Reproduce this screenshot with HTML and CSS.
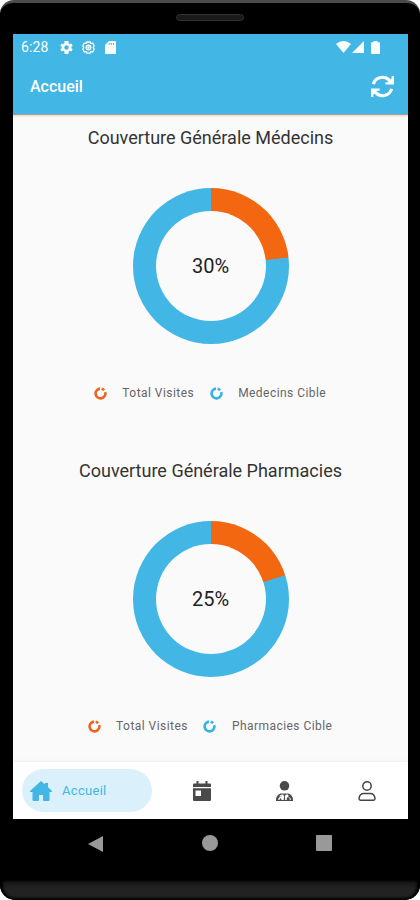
FILE: index.html
```
<!DOCTYPE html>
<html lang="fr">
<head>
  <meta charset="UTF-8" />
  <meta name="viewport" content="width=device-width, initial-scale=1" />
  <title>Accueil</title>
  <link rel="stylesheet" href="styles.css">
</head>
<body>

  <div class="phone">
    <div class="speaker-bar"><div class="speaker"></div></div>

    <div class="screen">
      <header class="header">
        <div class="status-bar">
          <span class="time">6:28</span>
          <svg class="status-icon" viewBox="2 2 20 20"><path fill-rule="evenodd" d="M19.400 13a7.500 7.500 0 0 0 0-2l2.100-1.600-2-3.500-2.500 1a7.500 7.500 0 0 0-1.700-1L15 2H9l-.4 3.900a7.500 7.500 0 0 0-1.700 1l-2.400-1-2 3.500L4.600 11a7.500 7.500 0 0 0 0 2l-2.100 1.600 2 3.500 2.500-1a7.500 7.500 0 0 0 1.700 1L9 22h6l.3-3.900a7.500 7.500 0 0 0 1.700-1l2.500 1 2-3.500zM12 15.500a3.500 3.500 0 1 1 0-7 3.500 3.500 0 0 1 0 7z"/></svg>
          <svg class="status-icon outline" viewBox="0 0 20 20"><path d="M7.500 1.500h5l1 2 3-.2 2.200 4L17.300 10l1.400 2.700-2.200 4-3-.2-1 2h-5l-1-2-3 .2-2.200-4L2.700 10 1.300 7.300l2.200-4 3 .2z"/><circle cx="10" cy="10" r="3.500"/><circle cx="10" cy="10" r=".8"/></svg>
          <svg class="sd-icon" viewBox="0 0 11 13"><path fill-rule="evenodd" d="M4 0h6a1 1 0 0 1 1 1v11a1 1 0 0 1-1 1H1a1 1 0 0 1-1-1V4zM3.700 2v2h1V2zM5.800 2v2h1V2zM7.900 2v2h1V2z"/></svg>
          <div class="status-right">
            <svg width="15" height="12" viewBox="0 0 15 12"><path d="M0 3Q7.500-3 15 3L7.500 12z"/></svg>
            <svg width="12" height="12" viewBox="0 0 12 12"><path d="M12 0v12H0z"/></svg>
            <svg class="battery" width="9" height="13" viewBox="0 0 9 13"><path d="M2.500 0h4v1.200H8a1 1 0 0 1 1 1V12a1 1 0 0 1-1 1H1a1 1 0 0 1-1-1V2.200a1 1 0 0 1 1-1h1.500z"/></svg>
          </div>
        </div>
        <div class="app-bar">
          <h1>Accueil</h1>
          <svg class="refresh" viewBox="0 0 24 24">
            <path class="arc" d="M2.500 9.500A9.800 9.800 0 0 1 19.500 6M21.500 14.500A9.800 9.800 0 0 1 4.500 18"/>
            <path d="M24 1v9h-9V7.600h2.500L21.500 3.500V1zM0 23v-9h9v2.400H6.500L2.500 20.500V23z"/>
          </svg>
        </div>
      </header>

      <main class="content">
        <section class="chart-card">
          <h2>Couverture Générale Médecins</h2>
          <div class="donut medecins"><span>30%</span></div>
          <div class="legend">
            <svg class="orange" viewBox="0 0 13 13"><path d="M7.600 1.700A4.900 4.900 0 0 1 10.200 3.200M11.200 5.100A4.900 4.900 0 1 1 6 1.600"/></svg>
            <span>Total Visites</span>
            <svg class="blue" viewBox="0 0 13 13"><path d="M7.600 1.700A4.900 4.900 0 0 1 10.200 3.200M11.200 5.100A4.900 4.900 0 1 1 6 1.600"/></svg>
            <span>Medecins Cible</span>
          </div>
        </section>

        <section class="chart-card">
          <h2>Couverture Générale Pharmacies</h2>
          <div class="donut pharmacies"><span>25%</span></div>
          <div class="legend">
            <svg class="orange" viewBox="0 0 13 13"><path d="M7.600 1.700A4.900 4.900 0 0 1 10.200 3.200M11.200 5.100A4.900 4.900 0 1 1 6 1.600"/></svg>
            <span>Total Visites</span>
            <svg class="blue" viewBox="0 0 13 13"><path d="M7.600 1.700A4.900 4.900 0 0 1 10.200 3.200M11.200 5.100A4.900 4.900 0 1 1 6 1.600"/></svg>
            <span>Pharmacies Cible</span>
          </div>
        </section>
      </main>

      <nav class="tabs">
        <a class="tab active">
          <svg width="22" height="20" viewBox="0 0 22 20"><path d="M11 0l4 3.600V2h3v4.300l4 3.700v1h-2.500v8a1 1 0 0 1-1 1H14a1 1 0 0 1-1-1v-5H9v5a1 1 0 0 1-1 1H3.500a1 1 0 0 1-1-1v-8H0v-1z"/></svg>
          <span>Accueil</span>
        </a>
        <a class="tab">
          <svg width="18" height="20" viewBox="0 0 18 20"><path fill-rule="evenodd" d="M3.500 0h2v2.500h7V0h2v2.500H17a1 1 0 0 1 1 1V6H0V3.500a1 1 0 0 1 1-1h2.500zM0 7.200h18V19a1 1 0 0 1-1 1H1a1 1 0 0 1-1-1zM2.500 9.500v5.500h5.500v-5.500z"/></svg>
        </a>
        <a class="tab">
          <svg width="17" height="20" viewBox="0 0 17 20"><circle cx="8.500" cy="4.800" r="4.800"/><path fill-rule="evenodd" d="M4.500 12.500h8Q17 14 17 19v1H0v-1Q0 14 4.500 12.500zM3.800 14v2Q2.200 16.700 2.200 19h1.300q0-1.700 1-1.700t1 1.700h2.300l.3-4-1-1.500H5.200V16h-.4v-2zM9.900 13.500l-1 1.500.3 4h1.800a1.700 1.700 0 0 1 1-2.700v-2.800zM13 16.300v-2.300h-.4v2.500q1.400.5 1.200 2.500h1q.4-2-1.800-2.700z"/></svg>
        </a>
        <a class="tab">
          <svg class="user" width="18" height="20" viewBox="0 0 18 20"><circle cx="9" cy="5" r="4.200"/><path d="M1 17.500Q1.500 12.500 6 12.500h6q4.500 0 5 5 0 1.700-1.500 1.700h-13Q1 19.200 1 17.500z"/></svg>
        </a>
      </nav>
    </div>

    <div class="android-bar">
      <svg width="16" height="18" viewBox="0 0 16 18"><path d="M15 1v16L0 9z"/></svg>
      <svg width="16" height="16" viewBox="0 0 16 16"><circle cx="8" cy="8" r="8"/></svg>
      <svg width="16" height="16" viewBox="0 0 16 16"><rect width="16" height="16" rx="1"/></svg>
    </div>
    <div class="chin"></div>
  </div>

</body>
</html>
```
FILE: styles.css
```
* {
  box-sizing: border-box;
}

body {
  margin: 0;
  background: #fff;
  font-family: Roboto, sans-serif;
  color: #333;
}

h1, h2 {
  margin: 0;
}

svg {
  display: block;
  flex-shrink: 0;
}

.phone {
  width: 420px;
  height: 900px;
  background: #000;
  border-top: 3px solid #4b4b4b;
  border-radius: 14px 14px 15px 15px;
  overflow: hidden;
  display: flex;
  flex-direction: column;
}

.speaker-bar {
  height: 31px;
  display: flex;
  justify-content: center;
  padding-top: 11px;
}

.speaker {
  width: 68px;
  height: 7px;
  border-radius: 4px;
  border: 1px solid #303030;
  background: #1a1a1a;
}

.screen {
  height: 785px;
  margin: 0 12px 0 13px;
  background: #fafafa;
  display: flex;
  flex-direction: column;
  overflow: hidden;
}

.header {
  height: 81px;
  background: #42b6e4;
  color: #fff;
  fill: #fff;
  border-bottom: 1px solid #a99f99;
  box-shadow: 0 1px 2px #e8cfc2;
}

.status-bar {
  height: 26px;
  padding: 0 28px 0 8px;
  display: flex;
  align-items: center;
}

.time {
  width: 39px;
  font-size: 14px;
  letter-spacing: 0.1px;
}

.status-icon {
  width: 13px;
  height: 13px;
  margin-right: 9px;
}

.outline {
  fill: none;
  stroke: #fff;
  stroke-width: 2;
}

.sd-icon {
  width: 11px;
  height: 13px;
  margin-left: 1px;
}

.status-right {
  margin-left: auto;
  display: flex;
  align-items: center;
  gap: 1px;
}

.battery {
  margin-left: 6px;
}

.app-bar {
  height: 52px;
  padding: 0 14px 0 17px;
  display: flex;
  justify-content: space-between;
  align-items: center;
}

.app-bar h1 {
  font-size: 16px;
  font-weight: 500;
}

.refresh {
  width: 23px;
  height: 23px;
}

.arc {
  fill: none;
  stroke: #fff;
  stroke-width: 3.300;
}

.content {
  flex: 1;
}

.chart-card {
  height: 333px;
  padding-top: 11px;
  display: flex;
  flex-direction: column;
  align-items: center;
}

.chart-card:last-child {
  height: 314px;
}

.chart-card h2 {
  font-size: 18px;
  font-weight: 400;
  line-height: 24px;
}

.donut {
  width: 156px;
  height: 156px;
  margin-top: 38px;
  border-radius: 50%;
  display: grid;
  place-items: center;
}

.donut span {
  width: 110px;
  height: 110px;
  border-radius: 50%;
  background: #fafafa;
  color: #222;
  font-size: 20px;
  line-height: 110px;
  text-align: center;
}

.medecins {
  background: conic-gradient(#f36710 23.200%, #42b6e4 23.300%);
}

.pharmacies {
  background: conic-gradient(#f36710 20%, #42b6e4 20.100%);
}

.legend {
  margin: 41px 1px 0 0;
  display: flex;
  align-items: center;
  gap: 15.500px;
  font-size: 12px;
  line-height: 16px;
  color: #666;
  letter-spacing: 0.450px;
}

.legend svg {
  width: 13px;
  height: 13px;
  fill: none;
  stroke-width: 2.600;
}

.orange {
  stroke: #ed651d;
}

.blue {
  stroke: #37b3e2;
}

.tabs {
  height: 57px;
  padding: 0 16px 0 9px;
  background: #fff;
  box-shadow: 0 -1px 3px #eee;
  display: flex;
  justify-content: space-between;
  align-items: center;
}

.tab {
  width: 50px;
  height: 43px;
  display: flex;
  justify-content: center;
  align-items: center;
  fill: #4a4a4a;
}

.tab.active {
  width: 130px;
  margin-right: -8px;
  padding-left: 8px;
  border-radius: 22px;
  background: #daf0fa;
  color: #42b6e4;
  fill: #42b6e4;
  justify-content: flex-start;
  gap: 10px;
  font-size: 13px;
  letter-spacing: 0.300px;
}

.user {
  fill: none;
  stroke: #444;
  stroke-width: 1.500;
}

.android-bar {
  height: 61px;
  padding: 16px 88px 0;
  display: flex;
  justify-content: space-between;
  align-items: flex-start;
  fill: #999;
}

.chin {
  flex: 1;
  background: linear-gradient(#111, #222 40%, #222 80%, #080808);
  border-radius: 0 0 15px 15px;
  box-shadow: inset 3px 0 3px #000, inset -3px 0 3px #000;
}
```
